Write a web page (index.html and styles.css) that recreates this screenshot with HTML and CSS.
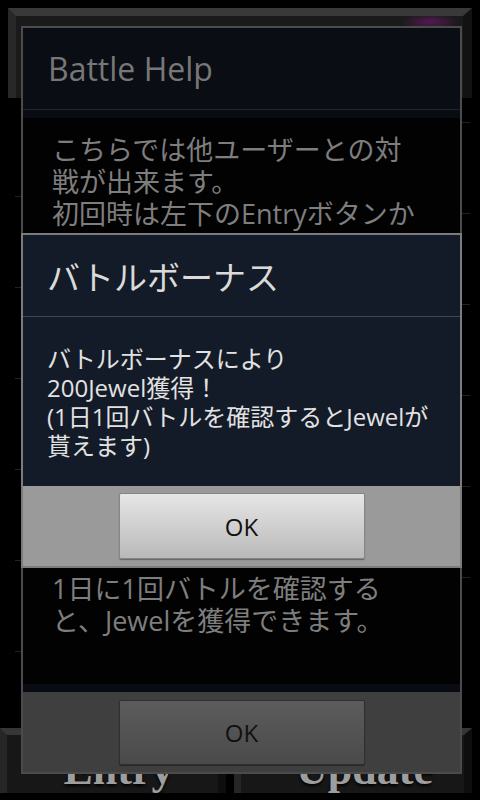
FILE: index.html
```html
<!DOCTYPE html>
<html lang="ja">
<head>
<meta charset="utf-8">
<title>Battle Help</title>
<link rel="stylesheet" href="styles.css">
</head>
<body>
<div class="screen">
  <div class="bg">
    <div class="topbar"></div>
    <div class="list">
      <div class="col col-left"></div>
      <div class="col col-right"></div>
    </div>
    <div class="tabs">
      <div class="tab tab-entry"><span>Entry</span></div>
      <div class="tab tab-update"><span>Update</span></div>
    </div>
  </div>

  <div class="dialog dialog-back">
    <div class="back-title">Battle Help</div>
    <div class="back-divider"></div>
    <div class="back-strip"></div>
    <div class="back-body">
      <p><span class="ln">こちらでは他ユーザーとの対</span><span class="ln">戦が出来ます。</span><span class="ln">初回時は左下のEntryボタンか</span></p>
      <p class="later"><span class="ln">1日に1回バトルを確認する</span><span class="ln">と、Jewelを獲得できます。</span></p>
    </div>
    <div class="back-strip"></div>
    <div class="back-buttons">
      <div class="btn btn-dark">OK</div>
    </div>
  </div>

  <div class="dialog dialog-front">
    <div class="front-title">バトルボーナス</div>
    <div class="front-divider"></div>
    <div class="front-body">
      <p><span class="ln">バトルボーナスにより</span><span class="ln">200Jewel獲得！</span><span class="ln">(1日1回バトルを確認するとJewelが</span><span class="ln">貰えます)</span></p>
    </div>
    <div class="front-buttons">
      <div class="btn btn-light">OK</div>
    </div>
  </div>
</div>
</body>
</html>
```

FILE: styles.css
```css
html, body {
  margin: 0;
  padding: 0;
  background: #000;
}

body {
  font-family: "Open Sans", "Noto Sans CJK JP", sans-serif;
}

.screen {
  position: relative;
  width: 480px;
  height: 800px;
  overflow: hidden;
  background: #000;
}

/* ---------- background app ---------- */
.bg {
  display: flex;
  flex-direction: column;
  height: 800px;
}

.topbar {
  margin: 8px 8px 0 8px;
  height: 90px;
  box-sizing: border-box;
  border-top: 8px solid #393939;
  border-left: 8px solid #282828;
  border-right: 9px solid #121212;
  background-color: #1a1a1a;
  background-image: radial-gradient(ellipse 30px 9px at 414px 6px, rgba(120, 25, 120, 0.6), rgba(120, 25, 120, 0) 100%);
}

.list {
  flex: 1;
  display: grid;
  grid-template-columns: 1fr 1fr;
  margin: 0 10px 0 15px;
}

.col-left {
  background-image: repeating-linear-gradient(to bottom, transparent 0, transparent 90px, #232323 90px, #232323 91px);
  background-position: 0 8px;
}

.col-right {
  background-image: repeating-linear-gradient(to bottom, transparent 0, transparent 90px, #232323 90px, #232323 91px);
  background-position: 0 -66px;
}

.tabs {
  display: flex;
  gap: 8px;
  height: 65px;
  margin: 0 8px 7px 0;
}

.tab {
  flex: 1;
  box-sizing: border-box;
  border-top: 7px solid #363636;
  border-left: 7px solid #262626;
  border-right: 8px solid #0e0e0e;
  background: #171717;
  overflow: hidden;
  text-align: center;
  font-family: "Liberation Serif", serif;
  font-weight: bold;
  font-size: 44px;
  line-height: 44px;
  color: #9e9e9e;
  text-shadow: 0 2px 3px #000;
  padding-top: 13px;
}

.tab-entry {
  padding-left: 12px;
}

.tab-update {
  padding-left: 24px;
}

/* ---------- dialogs ---------- */
.dialog {
  position: absolute;
  left: 21px;
  width: 441px;
  box-sizing: border-box;
  border: 2px solid;
  display: flex;
  flex-direction: column;
}

.dialog-back {
  top: 26px;
  height: 748px;
  border-color: #4b4b4b;
}

.dialog-front {
  top: 233px;
  height: 335px;
  border-color: #7c7c7c;
}

.back-title {
  height: 81px;
  background: #0a0d13;
  display: flex;
  align-items: center;
  padding-left: 25px;
  font-size: 32px;
  color: #777;
}

.back-divider {
  height: 1px;
  background: #1c2630;
}

.back-strip {
  height: 8px;
  background: #090c12;
}

.back-body {
  flex: 1;
  background: #020202;
  padding: 16px 28px 0 29px;
  font-size: 27px;
  color: #7e7e7e;
}

.back-body .ln {
  display: block;
  height: 32px;
  line-height: 32px;
}

.back-body p,
.front-body p {
  margin: 0;
}

.back-body .later {
  margin-top: 343px;
}

.back-buttons,
.front-buttons {
  height: 80px;
  box-sizing: border-box;
  display: flex;
  justify-content: center;
}

.back-buttons {
  background: #3f3f3f;
  padding-top: 8px;
}

.front-title {
  height: 81px;
  background: #141b28;
  display: flex;
  align-items: center;
  padding-left: 24px;
  font-size: 33px;
  color: #dadada;
}

.front-divider {
  height: 1px;
  background: #3a4a57;
}

.front-body {
  flex: 1;
  background: #141b28;
  padding: 27px 24px 0 24px;
  font-size: 24px;
  color: #e2e2e2;
}

.front-body .ln {
  display: block;
  height: 29px;
  line-height: 29px;
}

.front-buttons {
  background: #9a9a9a;
  padding-top: 7px;
}

.btn {
  width: 246px;
  box-sizing: border-box;
  border-radius: 2px;
  display: flex;
  align-items: center;
  justify-content: center;
  font-size: 24px;
  color: #111;
}

.btn-light {
  height: 66px;
  border: 1px solid #868686;
  background: linear-gradient(to bottom, #e6e6e6, #b9b9b9);
  box-shadow: 0 1px 1px rgba(0, 0, 0, 0.35);
}

.btn-dark {
  height: 65px;
  border: 1px solid #2f2f2f;
  background: linear-gradient(to bottom, #5c5c5c, #4a4a4a);
  box-shadow: 0 1px 1px rgba(0, 0, 0, 0.4);
}
```
